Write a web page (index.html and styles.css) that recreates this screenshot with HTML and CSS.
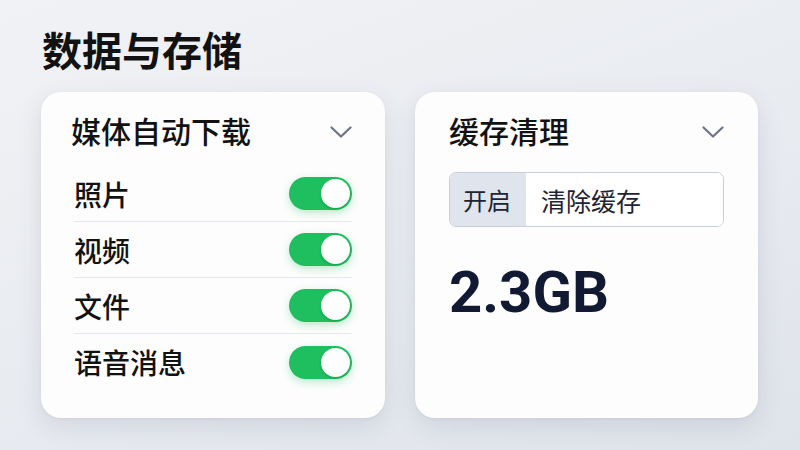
FILE: index.html
```html
<!DOCTYPE html>
<html lang="zh-CN">
<head>
    <meta charset="UTF-8">
    <meta name="viewport" content="width=device-width, initial-scale=1.0">
    <title>数据与存储</title>
    <link rel="stylesheet" href="styles.css">
</head>
<body>
    <main class="page">
        <h1 class="page-title">数据与存储</h1>

        <div class="cards">
            <!-- Media auto-download -->
            <section class="card card-media">
                <div class="card-head">
                    <h2>媒体自动下载</h2>
                    <svg class="chevron" width="22" height="12" viewBox="0 0 22 12">
                        <path d="M1.5 1.5 L11 10.5 L20.5 1.5" />
                    </svg>
                </div>
                <ul class="toggle-list">
                    <li class="toggle-row"><span>照片</span><span class="switch on"></span></li>
                    <li class="toggle-row"><span>视频</span><span class="switch on"></span></li>
                    <li class="toggle-row"><span>文件</span><span class="switch on"></span></li>
                    <li class="toggle-row"><span>语音消息</span><span class="switch on"></span></li>
                </ul>
            </section>

            <!-- Cache cleanup -->
            <section class="card card-cache">
                <div class="card-head">
                    <h2>缓存清理</h2>
                    <svg class="chevron" width="22" height="12" viewBox="0 0 22 12">
                        <path d="M1.5 1.5 L11 10.5 L20.5 1.5" />
                    </svg>
                </div>
                <div class="segment">
                    <span class="segment-label">开启</span>
                    <span class="segment-value">清除缓存</span>
                </div>
                <div class="cache-size">2.3GB</div>
            </section>
        </div>
    </main>
</body>
</html>
```

FILE: styles.css
```css
* {
    margin: 0;
    padding: 0;
    box-sizing: border-box;
}

body {
    width: 800px;
    height: 450px;
    overflow: hidden;
    font-family: 'Noto Sans CJK SC', 'Noto Sans', sans-serif;
    color: #121212;
    background: linear-gradient(160deg, #f1f2f5 0%, #e8ebf0 55%, #dfe3ea 100%);
}

.page {
    padding: 25px 0 0 41px;
}

.page-title {
    font-size: 40px;
    line-height: 48px;
    font-weight: 700;
    margin-bottom: 19px;
    padding-left: 1px;
}

.cards {
    display: flex;
    gap: 30px;
}

.card {
    height: 326px;
    background: #fdfdfd;
    border-radius: 20px;
    box-shadow: 0 8px 24px rgba(60, 70, 95, 0.12), 0 1px 3px rgba(60, 70, 95, 0.06);
}

.card-media {
    width: 344px;
    padding: 20px 33px 0 30px;
}

.card-cache {
    width: 343px;
    padding: 20px 34px 0 34px;
}

.card-head {
    display: flex;
    justify-content: space-between;
    align-items: center;
    margin-bottom: 18px;
}

.card-head h2 {
    font-size: 30px;
    line-height: 36px;
    font-weight: 500;
}

.chevron {
    fill: none;
    stroke: #6b7387;
    stroke-width: 2.2;
    stroke-linecap: round;
    stroke-linejoin: round;
    margin-top: 4px;
}

.toggle-list {
    list-style: none;
    margin-left: 3px;
}

.toggle-row {
    display: flex;
    justify-content: space-between;
    align-items: center;
    height: 56px;
    font-size: 28px;
    font-weight: 500;
    border-bottom: 1px solid #e5e8ef;
}

.toggle-row:last-child {
    border-bottom: none;
}

.switch {
    position: relative;
    width: 63px;
    height: 33px;
    border-radius: 17px;
    background: #1fbf5f;
    box-shadow: 0 3px 8px rgba(31, 191, 95, 0.3);
}

.switch::after {
    content: '';
    position: absolute;
    top: 2px;
    right: 2px;
    width: 29px;
    height: 29px;
    border-radius: 50%;
    background: radial-gradient(circle at 40% 35%, #ffffff 55%, #eceef0 100%);
    box-shadow: 0 1px 3px rgba(0, 0, 0, 0.2);
}

.segment {
    display: flex;
    height: 55px;
    margin-top: 24px;
    border: 1px solid #c6cddd;
    border-radius: 7px;
    overflow: hidden;
    font-size: 24px;
    color: #1d2433;
}

.segment-label {
    display: flex;
    align-items: center;
    width: 76px;
    padding-left: 13px;
    background: #dfe4ed;
}

.segment-value {
    display: flex;
    align-items: center;
    flex: 1;
    padding-left: 15px;
    background: #ffffff;
    font-size: 25px;
}

.cache-size {
    margin-top: 36px;
    font-family: 'Roboto', 'Liberation Sans', sans-serif;
    font-size: 58px;
    line-height: 1;
    font-weight: 700;
    color: #121a33;
}
```
